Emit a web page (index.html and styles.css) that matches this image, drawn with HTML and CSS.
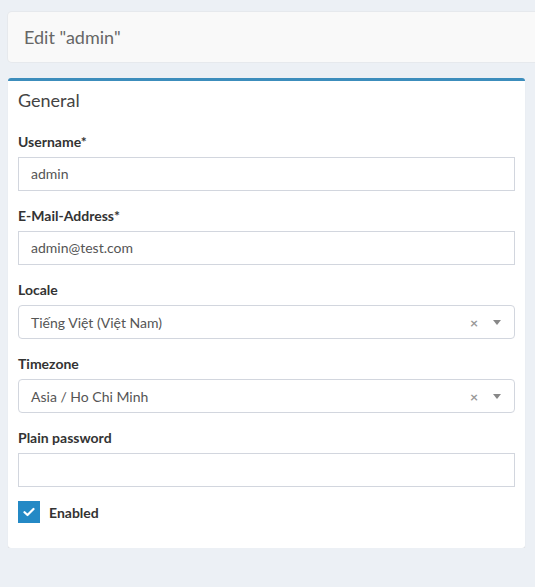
FILE: index.html
```html
<!DOCTYPE html>
<html>
<head>
<meta charset="utf-8">
<link rel="stylesheet" href="styles.css">
</head>
<body>
<div class="page">
  <div class="title-bar"><h1 class="title">Edit "admin"</h1></div>
  <div class="box">
    <div class="box-header"><h3 class="box-title">General</h3></div>
    <div class="box-body">
      <div class="form-group">
        <label class="label">Username*</label>
        <div class="input">admin</div>
      </div>
      <div class="form-group">
        <label class="label">E-Mail-Address*</label>
        <div class="input">admin@test.com</div>
      </div>
      <div class="form-group">
        <label class="label">Locale</label>
        <div class="select"><span class="select-text">Tiếng Việt (Việt Nam)</span><span class="clear">×</span><span class="arrow"></span></div>
      </div>
      <div class="form-group">
        <label class="label">Timezone</label>
        <div class="select"><span class="select-text">Asia / Ho Chi Minh</span><span class="clear">×</span><span class="arrow"></span></div>
      </div>
      <div class="form-group form-group-last">
        <label class="label">Plain password</label>
        <div class="input"></div>
      </div>
      <div class="check-row">
        <span class="checkbox"><svg width="12" height="10" viewBox="0 0 12 10"><path d="M1.5 5.2 L4.5 8 L10.5 2" fill="none" stroke="#fff" stroke-width="2.2" stroke-linecap="round" stroke-linejoin="round"/></svg></span>
        <span class="check-label">Enabled</span>
      </div>
    </div>
  </div>
</div>
</body>
</html>
```

FILE: styles.css
```css
html, body {
  margin: 0;
  padding: 0;
  background: #ecf0f5;
  font-family: "Source Sans Pro", Lato, "Liberation Sans", sans-serif;
  color: #333;
  font-size: 14px;
}
.page {
  padding: 12px 10px 0 8px;
  overflow: hidden;
}
.title-bar {
  background: #f9f9f9;
  border-radius: 4px;
  height: 50px;
  margin-right: -40px;
  box-shadow: 0 0 0 1px #e6e9ed;
  display: flex;
  align-items: center;
  padding-left: 16px;
}
.title {
  margin: 0;
  font-size: 18px;
  font-weight: 400;
  color: #666;
}
.box {
  margin-top: 16px;
  background: #fff;
  border-top: 3px solid #3c8dbc;
  border-radius: 3px;
  box-shadow: 0 1px 1px rgba(0,0,0,0.1);
}
.box-header {
  padding: 10px 10px 10px 10px;
}
.box-title {
  margin: 0;
  font-size: 18px;
  line-height: 1;
  font-weight: 400;
  color: #444;
}
.box-body {
  padding: 13px 10px 25px 10px;
}
.form-group {
  margin-bottom: 15px;
}
.form-group-last {
  margin-bottom: 14px;
}
.label {
  display: block;
  font-weight: 700;
  line-height: 20px;
  margin-bottom: 5px;
  color: #333;
}
.input {
  height: 34px;
  box-sizing: border-box;
  border: 1px solid #d2d6de;
  padding: 0 12px;
  line-height: 32px;
  color: #555;
}
.select {
  height: 34px;
  box-sizing: border-box;
  border: 1px solid #d2d6de;
  border-radius: 4px;
  padding: 0 12px;
  display: flex;
  align-items: center;
  color: #555;
}
.select-text {
  flex: 1;
}
.clear {
  color: #999;
  font-size: 14px;
  font-weight: 700;
  margin-right: 15px;
}
.arrow {
  width: 0;
  height: 0;
  border-left: 4px solid transparent;
  border-right: 4px solid transparent;
  border-top: 5px solid #888;
  margin-right: 1px;
}
.check-row {
  display: flex;
  align-items: center;
  gap: 9px;
  height: 22px;
}
.checkbox {
  width: 22px;
  height: 22px;
  background: #2489c5;
  display: flex;
  align-items: center;
  justify-content: center;
}
.check-label {
  font-weight: 700;
  color: #333;
}
```
